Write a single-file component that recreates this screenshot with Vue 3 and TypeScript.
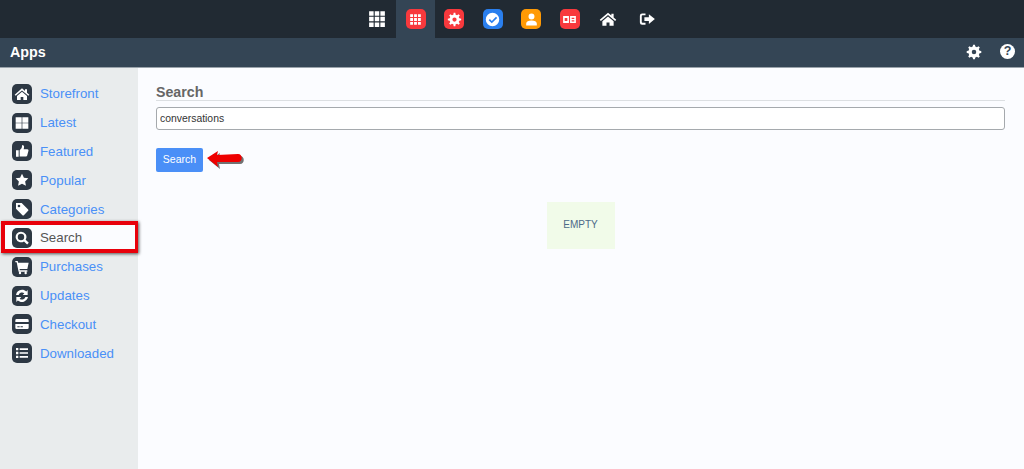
<template>
  <div class="page">
    <header class="topbar">
      <a
        v-for="item in topItems"
        :key="item.name"
        class="top-item"
        :class="{ active: item.active }"
      >
        <span v-if="item.color" class="app-tile" :style="{ background: item.color }">
          <svg viewBox="0 0 24 24" class="tile-icon"><path :d="item.d" fill-rule="evenodd" /></svg>
        </span>
        <svg v-else viewBox="0 0 24 24" class="plain-icon"><path :d="item.d" fill-rule="evenodd" /></svg>
      </a>
    </header>

    <div class="titlebar">
      <h1>Apps</h1>
      <div class="title-actions">
        <svg viewBox="0 0 24 24" class="title-cog"><path :d="cog" fill-rule="evenodd" /></svg>
        <span class="help">?</span>
      </div>
    </div>

    <div class="body">
      <nav class="sidebar">
        <a
          v-for="link in links"
          :key="link.label"
          class="nav-row"
          :class="{ current: link.label === 'Search' }"
        >
          <span class="nav-icon">
            <svg viewBox="0 0 24 24"><path :d="link.d" fill-rule="evenodd" /></svg>
          </span>
          <span>{{ link.label }}</span>
        </a>
      </nav>

      <main class="content">
        <h2>Search</h2>
        <input class="query" type="text" value="conversations" />
        <div class="actions">
          <button class="search-btn">Search</button>
          <svg class="arrow" viewBox="0 0 42 20" width="42" height="20">
            <path class="arrow-shadow" d="M2 10l11-7-1 4 21-1c5 0 5 8 0 8l-21 0 1 5z" />
            <path class="arrow-head" d="M0 8l11-7-1 4 21-1c5 0 5 8 0 8l-21 0 1 5z" />
          </svg>
        </div>
        <div class="empty-wrap">
          <div class="empty">EMPTY</div>
        </div>
      </main>
    </div>
  </div>
</template>

<script setup lang="ts">
// gear outline, generated so the teeth stay even
const gear = (teeth: number, outer: number, inner: number, hole: number): string => {
  const pts: string[] = [];
  const step = (Math.PI * 2) / teeth;
  for (let i = 0; i < teeth; i++) {
    const a = i * step;
    const corners: [number, number][] = [
      [a - step * 0.3, inner],
      [a - step * 0.16, outer],
      [a + step * 0.16, outer],
      [a + step * 0.3, inner],
    ];
    for (const [ang, r] of corners) {
      pts.push(`${(12 + r * Math.sin(ang)).toFixed(2)} ${(12 - r * Math.cos(ang)).toFixed(2)}`);
    }
  }
  return `M${pts.join('L')}zM${12 - hole} 12a${hole} ${hole} 0 1 0 ${hole * 2} 0a${hole} ${hole} 0 1 0 ${-hole * 2} 0z`;
};

const grid3 = (start: number, size: number, pitch: number): string => {
  let d = '';
  for (let r = 0; r < 3; r++) {
    for (let c = 0; c < 3; c++) {
      d += `M${start + c * pitch} ${start + r * pitch}h${size}v${size}h${-size}z`;
    }
  }
  return d;
};

const cog = gear(8, 11, 8.5, 3.4);
const home =
  'M12 3.500L1 13l1.500 1.800L12 6.800l9.500 8L23 13l-3.500-3V5h-3v2.400zM12 8.800L4.500 15v6H10v-4.500h4V21h5.500v-6z';

const topItems = [
  { name: 'all', d: grid3(1.5, 6, 7.5), color: '' },
  { name: 'apps', d: grid3(4.5, 4, 5.5), color: '#f8393d', active: true },
  { name: 'settings', d: gear(8, 9.5, 7, 3), color: '#f8393d' },
  {
    name: 'verified',
    d: 'M12 2.500a9.500 9.500 0 1 0 0 19 9.500 9.500 0 0 0 0-19zm4.900 5.700l1.700 1.700-7.600 7.500-4.400-4.300 1.700-1.700 2.700 2.600z',
    color: '#2a7fee',
  },
  {
    name: 'profile',
    d: 'M12 3.500a4.200 4.200 0 1 0 0 8.400 4.200 4.200 0 0 0 0-8.400zM4.500 20.500v-3c0-2.200 3.200-4 7.500-4s7.500 1.800 7.500 4v3z',
    color: '#ff9a05',
  },
  {
    name: 'tickets',
    d: 'M3 7h8.200v10H3zM5.200 9.800v4.400h3.800V9.800zM12.800 7H21v10h-8.200zM15 11.300h3.800V9.500H15zM15 14.700h3.800v-1.800H15z',
    color: '#f8393d',
  },
  { name: 'home', d: home, color: '' },
  {
    name: 'logout',
    d: 'M10 4.500H5.500A3 3 0 0 0 2.500 7.500v9a3 3 0 0 0 3 3H10V17H6a1 1 0 0 1-1-1V8a1 1 0 0 1 1-1h4zM14.500 5.500v4H8.500v5h6v4L22.500 12z',
    color: '',
  },
];

const links = [
  { label: 'Storefront', d: home },
  { label: 'Latest', d: 'M2.500 3.500h9v8h-9zM12.500 3.500h9v8h-9zM2.500 12.500h9v8h-9zM12.500 12.500h9v8h-9z' },
  {
    label: 'Featured',
    d: 'M3 11h4v9.500H3zM8.500 11l3-3.500.8-4.500c2.200 0 3.200 1.500 2.700 4l-.5 2.500h5.500c1.400 0 2 1.200 1.700 2.200l-2 7.300c-.2.800-.9 1.200-1.700 1.200H8.500z',
  },
  { label: 'Popular', d: 'M12 2.500l2.900 6.100 6.600.9-4.800 4.600 1.200 6.600-5.900-3.200-5.900 3.200 1.200-6.600-4.800-4.600 6.600-.9z' },
  {
    label: 'Categories',
    d: 'M3 3h8.500l9.700 9.700a1.500 1.500 0 0 1 0 2.100l-6.400 6.400a1.500 1.500 0 0 1-2.100 0L3 11.500zM7.500 5.500a2 2 0 1 0 0 4 2 2 0 0 0 0-4z',
  },
  {
    label: 'Search',
    d: 'M10.500 2.500a8 8 0 1 0 4.500 14.600l4.700 4.700 2.500-2.500-4.700-4.700A8 8 0 0 0 10.500 2.500zm0 3.200a4.800 4.800 0 1 1 0 9.600 4.800 4.800 0 0 1 0-9.600z',
  },
  {
    label: 'Purchases',
    d: 'M2 3h3.600l.6 2.500H22l-2 9.500H8.300l.4 2H20v2H6.900L4 5H2zM9 19.300a1.800 1.800 0 1 0 0 3.600 1.800 1.800 0 0 0 0-3.600zM17.500 19.300a1.800 1.800 0 1 0 0 3.600 1.800 1.800 0 0 0 0-3.600z',
  },
  {
    label: 'Updates',
    d: 'M12 2.500c2.500 0 4.700 1 6.300 2.600L20.500 3v7.500H13l2.500-2.500A5.300 5.300 0 0 0 6.900 10.500H3A9.500 9.500 0 0 1 12 2.500zM3.500 13.500H11L8.500 16a5.300 5.300 0 0 0 8.600-2.500H21A9.500 9.500 0 0 1 5.700 18.900L3.500 21z',
  },
  {
    label: 'Checkout',
    d: 'M4 4.500h16a2 2 0 0 1 2 2V9H2V6.500a2 2 0 0 1 2-2zM2 12h20v5.500a2 2 0 0 1-2 2H4a2 2 0 0 1-2-2zM5 15.500h3.500V17H5zM9.800 15.500h3.500V17H9.800z',
  },
  {
    label: 'Downloaded',
    d: 'M3 4.500h3.500V8H3zM3 10.300h3.500v3.500H3zM3 16h3.500v3.500H3zM8.500 5h12.500v2.500H8.500zM8.500 10.800h12.500v2.500H8.500zM8.500 16.500h12.500V19H8.500z',
  },
];
</script>

<style scoped>
.page {
  height: 469px;
  display: flex;
  flex-direction: column;
  overflow: hidden;
  font-family: "Liberation Sans", Arial, sans-serif;
}
.topbar {
  height: 38px;
  flex: none;
  display: flex;
  justify-content: center;
  background: #212a33;
}
.top-item {
  width: 38.6px;
  display: flex;
  align-items: center;
  justify-content: center;
}
.top-item.active {
  background: #344555;
}
.app-tile {
  width: 20px;
  height: 20px;
  border-radius: 5px;
  display: flex;
  align-items: center;
  justify-content: center;
}
.tile-icon {
  width: 17px;
  height: 17px;
  fill: #fff;
}
.plain-icon {
  width: 18px;
  height: 18px;
  fill: #fff;
}
.titlebar {
  height: 30px;
  flex: none;
  box-sizing: border-box;
  display: flex;
  align-items: center;
  justify-content: space-between;
  padding: 0 9px 2px 10px;
  background: #344555;
  border-bottom: 1px solid #9aa3ab;
}
.titlebar h1 {
  margin: 0;
  font-size: 14.3px;
  font-weight: 700;
  color: #fff;
}
.title-actions {
  display: flex;
  align-items: center;
  gap: 18px;
}
.title-cog {
  width: 16px;
  height: 16px;
  fill: #fff;
}
.help {
  width: 15px;
  height: 15px;
  border-radius: 50%;
  background: #fff;
  color: #344555;
  font-size: 12.5px;
  font-weight: 700;
  line-height: 15px;
  text-align: center;
}
.body {
  flex: 1;
  display: flex;
  min-height: 0;
}
.sidebar {
  width: 138px;
  flex: none;
  box-sizing: border-box;
  padding-top: 11.3px;
  background: #e9eced;
}
.nav-row {
  position: relative;
  height: 28.85px;
  display: flex;
  align-items: center;
  gap: 8px;
  padding-left: 12px;
  font-size: 13.3px;
  color: #4a90f7;
}
.nav-row.current {
  color: #555;
  z-index: 1;
}
/* red annotation box drawn over the row */
.nav-row.current::after {
  content: "";
  position: absolute;
  left: 1px;
  right: 0;
  top: -3px;
  bottom: -1px;
  border: 4px solid #e8000b;
  border-right-width: 3px;
  box-shadow: 1px 1px 3px rgba(0, 0, 0, 0.65);
}
.nav-row.current::before {
  content: "";
  position: absolute;
  inset: 0;
  z-index: -1;
  background: #fbfcff;
}
.nav-icon {
  width: 20px;
  height: 20px;
  border-radius: 5px;
  background: #2d3844;
  display: flex;
  align-items: center;
  justify-content: center;
}
.nav-icon svg {
  width: 16px;
  height: 16px;
  fill: #fff;
}
.content {
  flex: 1;
  min-width: 0;
  padding: 17px 19px 0 18px;
  background: #fbfcff;
}
.content h2 {
  margin: 0 0 6px;
  font-size: 14.2px;
  line-height: 15px;
  font-weight: 700;
  color: #666;
  border-bottom: 1px solid #dcdfe2;
}
.query {
  display: block;
  width: 100%;
  height: 23px;
  box-sizing: border-box;
  padding: 0 3px;
  border: 1px solid #a5a9ad;
  border-radius: 3px;
  background: #fff;
  font-family: inherit;
  font-size: 10.4px;
  color: #333;
}
.actions {
  margin-top: 18px;
  display: flex;
  align-items: center;
  gap: 4px;
}
.search-btn {
  width: 47px;
  height: 24px;
  padding: 0 0 2px;
  border: none;
  border-radius: 2px;
  background: #4a8ff7;
  color: #fff;
  font-family: inherit;
  font-size: 10.5px;
}
.arrow-head {
  fill: #ee0000;
}
.arrow-shadow {
  fill: rgba(0, 0, 0, 0.55);
}
.empty-wrap {
  margin-top: 30px;
  display: flex;
  justify-content: center;
}
.empty {
  width: 68px;
  height: 47px;
  box-sizing: border-box;
  padding-bottom: 2px;
  display: flex;
  align-items: center;
  justify-content: center;
  background: #f1fbe9;
  color: #4d6a88;
  font-size: 10px;
}
</style>
